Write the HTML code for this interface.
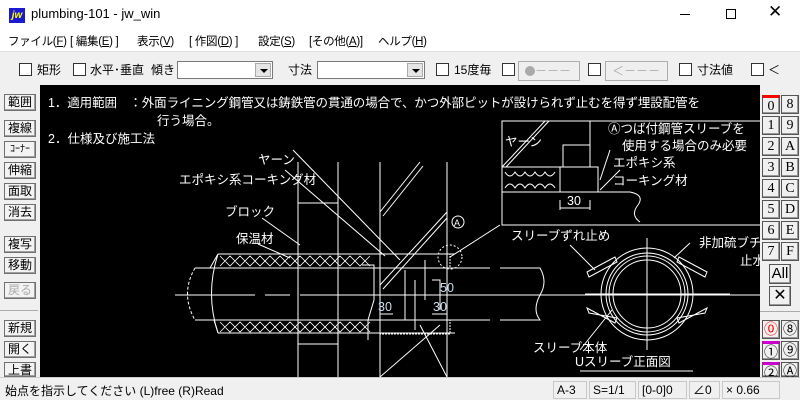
<!DOCTYPE html>
<html><head><meta charset="utf-8"><style>
*{margin:0;padding:0;box-sizing:border-box}
body{width:800px;height:400px;overflow:hidden;background:#f0f0f0;font-family:"Liberation Sans","Noto Sans CJK JP",sans-serif;font-size:12px;color:#000;position:relative}
.abs{position:absolute}
.title{left:0;top:0;width:800px;height:30px;background:#fff}
.menu{left:0;top:30px;width:800px;height:21px;background:#fff}
.menu span{position:absolute;top:3px;font-size:11.5px;white-space:nowrap;letter-spacing:-0.3px}
.tb{left:0;top:51px;width:800px;height:34px;background:#f0f0f0;border-top:1px solid #ddd}
.cb{position:absolute;width:13px;height:13px;border:1px solid #333;background:#fff;top:11px}
.lbl{position:absolute;top:9px;font-size:12px;white-space:nowrap}
.combo{position:absolute;top:9px;height:18px;border:1px solid #7a7a7a;background:#fff}
.combo i{position:absolute;right:1px;top:1px;width:16px;height:14px;background:#e5e5e5;border:1px solid #aaa}
.combo i:after{content:"";position:absolute;left:4px;top:5px;border:4px solid transparent;border-top:4px solid #000;border-bottom:0}
.gbtn{position:absolute;top:9px;height:20px;border:1px solid #adadad;background:#efefef;color:#aaa;font-size:12px;line-height:18px;padding-left:6px;white-space:nowrap}
.draw{left:40px;top:85px;width:720px;height:292px;background:#000}
.lb{position:absolute;left:4px;width:32px;height:17px;border:1px solid #707070;background:#f3f3f3;font-size:12px;text-align:center;line-height:15px;box-shadow:inset -1px -1px #a0a0a0;white-space:nowrap;overflow:hidden}
.rb{position:absolute;width:18px;height:19px;border:1px solid #555;background:#f0f0f0;font-family:"Liberation Serif","Noto Serif CJK SC",serif;font-size:14px;text-align:center;line-height:17px;box-shadow:inset -1px -1px #999}
.status{left:0;top:377px;width:800px;height:23px;background:#f0f0f0;border-top:1px solid #ccc}
.sf{position:absolute;top:3px;height:18px;border:1px solid #c8c8c8;font-size:12px;line-height:16px;padding-left:3px;white-space:nowrap;overflow:hidden}
svg text{font-family:"Liberation Sans","Noto Sans CJK JP",sans-serif;fill:#fff;font-size:12.5px}
</style></head><body>
<div class="abs title">
  <div class="abs" style="left:9px;top:8px;width:16px;height:15px;background:#1a1ad0;color:#ff0;font-size:10px;font-weight:bold;font-style:italic;line-height:15px;text-align:center">jw</div>
  <div class="abs" style="left:31px;top:6px;font-size:13px">plumbing-101 - jw_win</div>
  <div class="abs" style="left:680px;top:14px;width:10px;height:1px;background:#000"></div>
  <div class="abs" style="left:726px;top:9px;width:10px;height:10px;border:1px solid #000"></div>
  <div class="abs" style="left:768px;top:2px;font-size:17px">✕</div>
</div>
<div class="abs menu">
  <span style="left:8px">ファイル(<u>F</u>)</span>
  <span style="left:70px">[ 編集(<u>E</u>) ]</span>
  <span style="left:137px">表示(<u>V</u>)</span>
  <span style="left:189px">[ 作図(<u>D</u>) ]</span>
  <span style="left:258px">設定(<u>S</u>)</span>
  <span style="left:309px">[その他(<u>A</u>)]</span>
  <span style="left:378px">ヘルプ(<u>H</u>)</span>
</div>
<div class="abs tb">
  <div class="cb" style="left:19px"></div><span class="lbl" style="left:37px">矩形</span>
  <div class="cb" style="left:73px"></div><span class="lbl" style="left:90px">水平･垂直</span>
  <span class="lbl" style="left:151px">傾き</span>
  <div class="combo" style="left:177px;width:96px"><i></i></div>
  <span class="lbl" style="left:288px">寸法</span>
  <div class="combo" style="left:317px;width:108px"><i></i></div>
  <div class="cb" style="left:436px"></div><span class="lbl" style="left:454px">15度毎</span>
  <div class="cb" style="left:502px"></div>
  <div class="gbtn" style="left:518px;width:62px"><span style="display:inline-block;width:10px;height:10px;border-radius:5px;background:#aaa;vertical-align:-1px"></span>－－－</div>
  <div class="cb" style="left:588px"></div>
  <div class="gbtn" style="left:605px;width:63px">＜－－－</div>
  <div class="cb" style="left:679px"></div><span class="lbl" style="left:697px">寸法値</span>
  <div class="cb" style="left:751px"></div><span class="lbl" style="left:768px">＜</span>
</div>
<div class="abs" style="left:0;top:85px;width:40px;height:292px;background:#f0f0f0">
  <div class="lb" style="top:9px">範囲</div>
  <div class="lb" style="top:35px">複線</div>
  <div class="lb" style="top:56px;font-size:10px">ｺｰﾅｰ</div>
  <div class="lb" style="top:77px">伸縮</div>
  <div class="lb" style="top:98px">面取</div>
  <div class="lb" style="top:119px">消去</div>
  <div class="lb" style="top:151px">複写</div>
  <div class="lb" style="top:172px">移動</div>
  <div class="lb" style="top:197px;color:#aaa">戻る</div>
  <div class="abs" style="left:0;top:225px;width:38px;height:1px;background:#aaa"></div>
  <div class="lb" style="top:235px">新規</div>
  <div class="lb" style="top:256px">開く</div>
  <div class="lb" style="top:277px;height:15px">上書</div>
</div>
<div class="abs draw">
<svg width="720" height="292" viewBox="40 85 720 292" stroke="#fff" fill="none" stroke-width="1">
  <text x="48" y="107" stroke="none" textLength="652">1．適用範囲　：外面ライニング鋼管又は鋳鉄管の貫通の場合で、かつ外部ピットが設けられず止むを得ず埋設配管を</text>
  <text x="157" y="125" stroke="none">行う場合。</text>
  <text x="48" y="143" stroke="none">2．仕様及び施工法</text>
  <path d="M298 162V377M338 162V377M380 162V377M447 162V377M298 203H338M298 344H338"/>
  <path d="M380 212L420 162M383 216L423 166M380 285L447 212M383 289L447 218M380 377L440 325M420 325L447 377"/>
  <path d="M195 268H490M195 320H490M175 295H255M265 295H290M300 295H760"/>
  <path d="M195 268Q180 294 195 320" stroke-dasharray="3 2"/>
  <path d="M218 254H455M218 333H455M218 254Q205 294 218 333" />
  <path d="M218 254L210 268M218 333L214 320"/>
  <path d="M220 256l10 10l10-10l10 10l10-10l10 10l10-10l10 10l10-10l10 10l10-10l10 10l10-10l10 10l10-10l10 10M220 266l10-10 10 10 10-10 10 10 10-10 10 10 10-10 10 10 10-10 10 10 10-10 10 10 10-10 10 10 10-10" stroke-width="0.8"/>
  <path d="M220 322l10 10l10-10l10 10l10-10l10 10l10-10l10 10l10-10l10 10l10-10l10 10l10-10l10 10l10-10l10 10M220 332l10-10 10 10 10-10 10 10 10-10 10 10 10-10 10 10 10-10 10 10 10-10 10 10 10-10 10 10 10-10" stroke-width="0.8"/>
  <rect x="380" y="254" width="70" height="14" stroke-dasharray="2 1"/>
  <rect x="380" y="320" width="70" height="14" stroke-dasharray="2 1"/>
  <path d="M362 265H374V300L368 320V340M405 270V320M415 280V330M425 260V300M432 280H440V310"/>
  <circle cx="450" cy="257" r="12" stroke-dasharray="2 2"/>
  <path d="M293 150L400 260M285 170L385 256M262 218L300 245M258 244L290 258M450 257L500 225"/>
  <text x="258" y="164" stroke="none">ヤーン</text>
  <text x="179" y="184" stroke="none">エポキシ系コーキング材</text>
  <text x="225" y="216" stroke="none">ブロック</text>
  <text x="236" y="243" stroke="none">保温材</text>
  <circle cx="458" cy="222" r="6"/><text x="454" y="226" stroke="none" style="font-size:9px">A</text>
  <text x="378" y="311" stroke="none" style="fill:#cde">30</text>
  <text x="440" y="292" stroke="none" style="fill:#cde">50</text>
  <text x="433" y="311" stroke="none" style="fill:#cde">30</text>
  <path d="M380 314H393M432 314H447"/>
  <path d="M760 121H502V225H760M502 167H590M502 192H630Q645 195 638 205Q630 215 640 222M590 121V167"/>
  <path d="M502 167L545 121M506 167L549 121"/>
  <rect x="563" y="145" width="27" height="22"/><rect x="560" y="167" width="38" height="25"/>
  <path d="M505 172q5 8 10 0q5 8 10 0q5 8 10 0q5 8 10 0q5 8 10 0M505 188q5-8 10 0q5-8 10 0q5-8 10 0q5-8 10 0q5-8 10 0"/>
  <path d="M560 200V210M590 200V210M560 208H590M610 150L600 180M620 170L600 190"/>
  <text x="505" y="146" stroke="none">ヤーン</text>
  <text x="567" y="205" stroke="none">30</text>
  <text x="608" y="133" stroke="none">Ⓐつば付鋼管スリーブを</text>
  <text x="622" y="150" stroke="none">使用する場合のみ必要</text>
  <text x="613" y="167" stroke="none">エポキシ系</text>
  <text x="613" y="185" stroke="none">コーキング材</text>
  <circle cx="647" cy="294" r="46"/><circle cx="647" cy="294" r="41"/><circle cx="647" cy="294" r="38"/><circle cx="647" cy="294" r="34"/>
  <path d="M647 238V350M585 294H730"/>
  <path d="M587 272L615 257L617 262L589 277ZM707 272L679 257L677 262L705 277ZM587 308L615 323L617 318L589 313ZM707 308L679 323L677 318L705 313Z"/>
  <path d="M570 245L595 270M690 243L674 258M580 350L612 310M580 371H693"/>
  <text x="511" y="240" stroke="none">スリーブずれ止め</text>
  <text x="699" y="247" stroke="none">非加硫ブチル</text>
  <text x="740" y="265" stroke="none">止水</text>
  <text x="533" y="352" stroke="none">スリーブ本体</text>
  <text x="575" y="366" stroke="none">Uスリーブ正面図</text>
  <path d="M500 268H540Q548 282 540 295Q532 310 540 320H500"/>
</svg>
</div>
<div class="abs" style="left:760px;top:85px;width:40px;height:292px;background:#f0f0f0">
  <div class="rb" style="left:2px;top:10px;border-top:3px solid red">0</div><div class="rb" style="left:21px;top:10px">8</div>
  <div class="rb" style="left:2px;top:31px">1</div><div class="rb" style="left:21px;top:31px">9</div>
  <div class="rb" style="left:2px;top:52px">2</div><div class="rb" style="left:21px;top:52px">A</div>
  <div class="rb" style="left:2px;top:73px">3</div><div class="rb" style="left:21px;top:73px">B</div>
  <div class="rb" style="left:2px;top:94px">4</div><div class="rb" style="left:21px;top:94px">C</div>
  <div class="rb" style="left:2px;top:115px">5</div><div class="rb" style="left:21px;top:115px">D</div>
  <div class="rb" style="left:2px;top:136px">6</div><div class="rb" style="left:21px;top:136px">E</div>
  <div class="rb" style="left:2px;top:157px">7</div><div class="rb" style="left:21px;top:157px">F</div>
  <div class="rb" style="left:9px;top:179px;width:22px;height:20px;font-family:'Liberation Sans',sans-serif;font-size:15px">All</div>
  <div class="rb" style="left:9px;top:201px;width:22px;height:20px;font-family:'Liberation Sans',sans-serif;font-size:16px">✕</div>
  <div class="abs" style="left:0;top:226px;width:40px;height:1px;background:#aaa"></div>
  <div class="rb" style="left:2px;top:235px;font-family:'Liberation Sans','Noto Sans CJK JP',sans-serif;color:red">⓪</div><div class="rb" style="left:21px;top:235px;font-family:'Liberation Sans','Noto Sans CJK JP',sans-serif">⑧</div>
  <div class="rb" style="left:2px;top:256px;font-family:'Liberation Sans','Noto Sans CJK JP',sans-serif;border-top:3px solid #c0c">①</div><div class="rb" style="left:21px;top:256px;font-family:'Liberation Sans','Noto Sans CJK JP',sans-serif">⑨</div>
  <div class="rb" style="left:2px;top:277px;height:15px;font-family:'Liberation Sans','Noto Sans CJK JP',sans-serif;border-top:3px solid #c0c">②</div><div class="rb" style="left:21px;top:277px;height:15px;font-family:'Liberation Sans','Noto Sans CJK JP',sans-serif">Ⓐ</div>
</div>
<div class="abs status">
  <div class="abs" style="left:5px;top:4px;font-size:12px;white-space:nowrap">始点を指示してください (L)free (R)Read</div>
  <div class="sf" style="left:553px;width:34px">A-3</div>
  <div class="sf" style="left:589px;width:47px">S=1/1</div>
  <div class="sf" style="left:638px;width:49px">[0-0]0</div>
  <div class="sf" style="left:689px;width:31px">∠0</div>
  <div class="sf" style="left:722px;width:58px">× 0.66</div>
</div>
</body></html>
